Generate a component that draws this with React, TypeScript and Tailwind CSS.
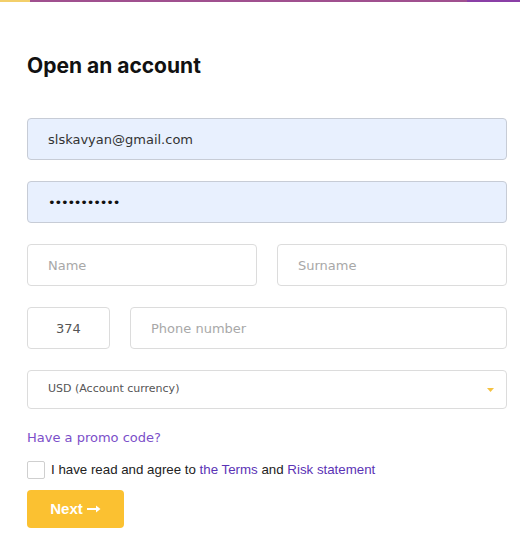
import { useState } from 'react'

const inputBase =
  'h-[42px] w-full rounded-[4px] border px-5 text-[13px] outline-none placeholder:text-[#a8a8a8]'

export default function App() {
  const [agree, setAgree] = useState(false)

  return (
    <div className="min-h-[557px] w-[520px] bg-white" style={{ fontFamily: '"DejaVu Sans", sans-serif' }}>
      {/* top accent line */}
      <div className="flex h-[2px] w-full">
        <div className="w-[30px] bg-[#f3cf6a]" />
        <div className="flex-1 bg-[#a0508f]" />
        <div className="w-[53px] bg-[#8a3fa6]" />
      </div>

      <div className="px-[27px] pt-[52px]">
        <h1 className="text-[21px] font-bold leading-[24px] text-[#111]" style={{ fontFamily: 'Inter, sans-serif' }}>
          Open an account
        </h1>

        <div className="mt-[40px] flex w-[480px] flex-col gap-[21px]">
          <input
            className={`${inputBase} border-[#c7ccd6] bg-[#e8f0fe] text-[#333]`}
            defaultValue="slskavyan@gmail.com"
          />
          <input
            type="password"
            className={`${inputBase} border-[#c7ccd6] bg-[#e8f0fe] text-[12px] tracking-[-1.2px] text-[#111]`}
            defaultValue="slskavyan12"
          />

          <div className="flex gap-5">
            <input className={`${inputBase} border-[#dcdcdc] bg-white`} placeholder="Name" />
            <input className={`${inputBase} border-[#dcdcdc] bg-white`} placeholder="Surname" />
          </div>

          <div className="flex gap-5">
            <input
              className="h-[42px] w-[83px] shrink-0 rounded-[4px] border border-[#dcdcdc] bg-white text-center text-[13px] text-[#555] outline-none"
              defaultValue="374"
            />
            <input className={`${inputBase} border-[#dcdcdc] bg-white`} placeholder="Phone number" />
          </div>

          <div className="flex h-[39px] items-center justify-between rounded-[4px] border border-[#dcdcdc] bg-white pl-5 pr-[12px]">
            <span className="text-[11px] text-[#555]">USD (Account currency)</span>
            <svg width="7" height="4" viewBox="0 0 7 4">
              <path d="M0 0h7L3.5 4z" fill="#f5c242" />
            </svg>
          </div>
        </div>

        <div className="mt-[16px]">
          <a href="#" className="text-[13px] text-[#7b4fc9]">
            Have a promo code?
          </a>
        </div>

        <label
          className="mt-[11px] flex items-center gap-[6px] text-[13.3px] text-[#222]"
          style={{ fontFamily: '"Liberation Sans", Arial, sans-serif' }}
        >
          <input
            type="checkbox"
            checked={agree}
            onChange={() => setAgree(!agree)}
            className="h-[18px] w-[18px] appearance-none rounded-[2px] border border-[#cfcfcf] bg-white"
          />
          <span>
            I have read and agree to <span className="text-[#5b33b5]">the Terms</span> and{' '}
            <span className="text-[#5b33b5]">Risk statement</span>
          </span>
        </label>

        <button
          className="mt-[10px] flex h-[38px] w-[97px] items-center justify-center gap-1 rounded-[4px] bg-[#fbc131] text-[15px] font-bold text-white"
          style={{ fontFamily: '"Liberation Sans", Arial, sans-serif' }}
        >
          Next
          <svg width="14" height="8" viewBox="0 0 14 8">
            <path d="M0 4h11" stroke="#fff" strokeWidth="2" />
            <path d="M9 0.5L13.5 4 9 7.5z" fill="#fff" />
          </svg>
        </button>
      </div>
    </div>
  )
}
